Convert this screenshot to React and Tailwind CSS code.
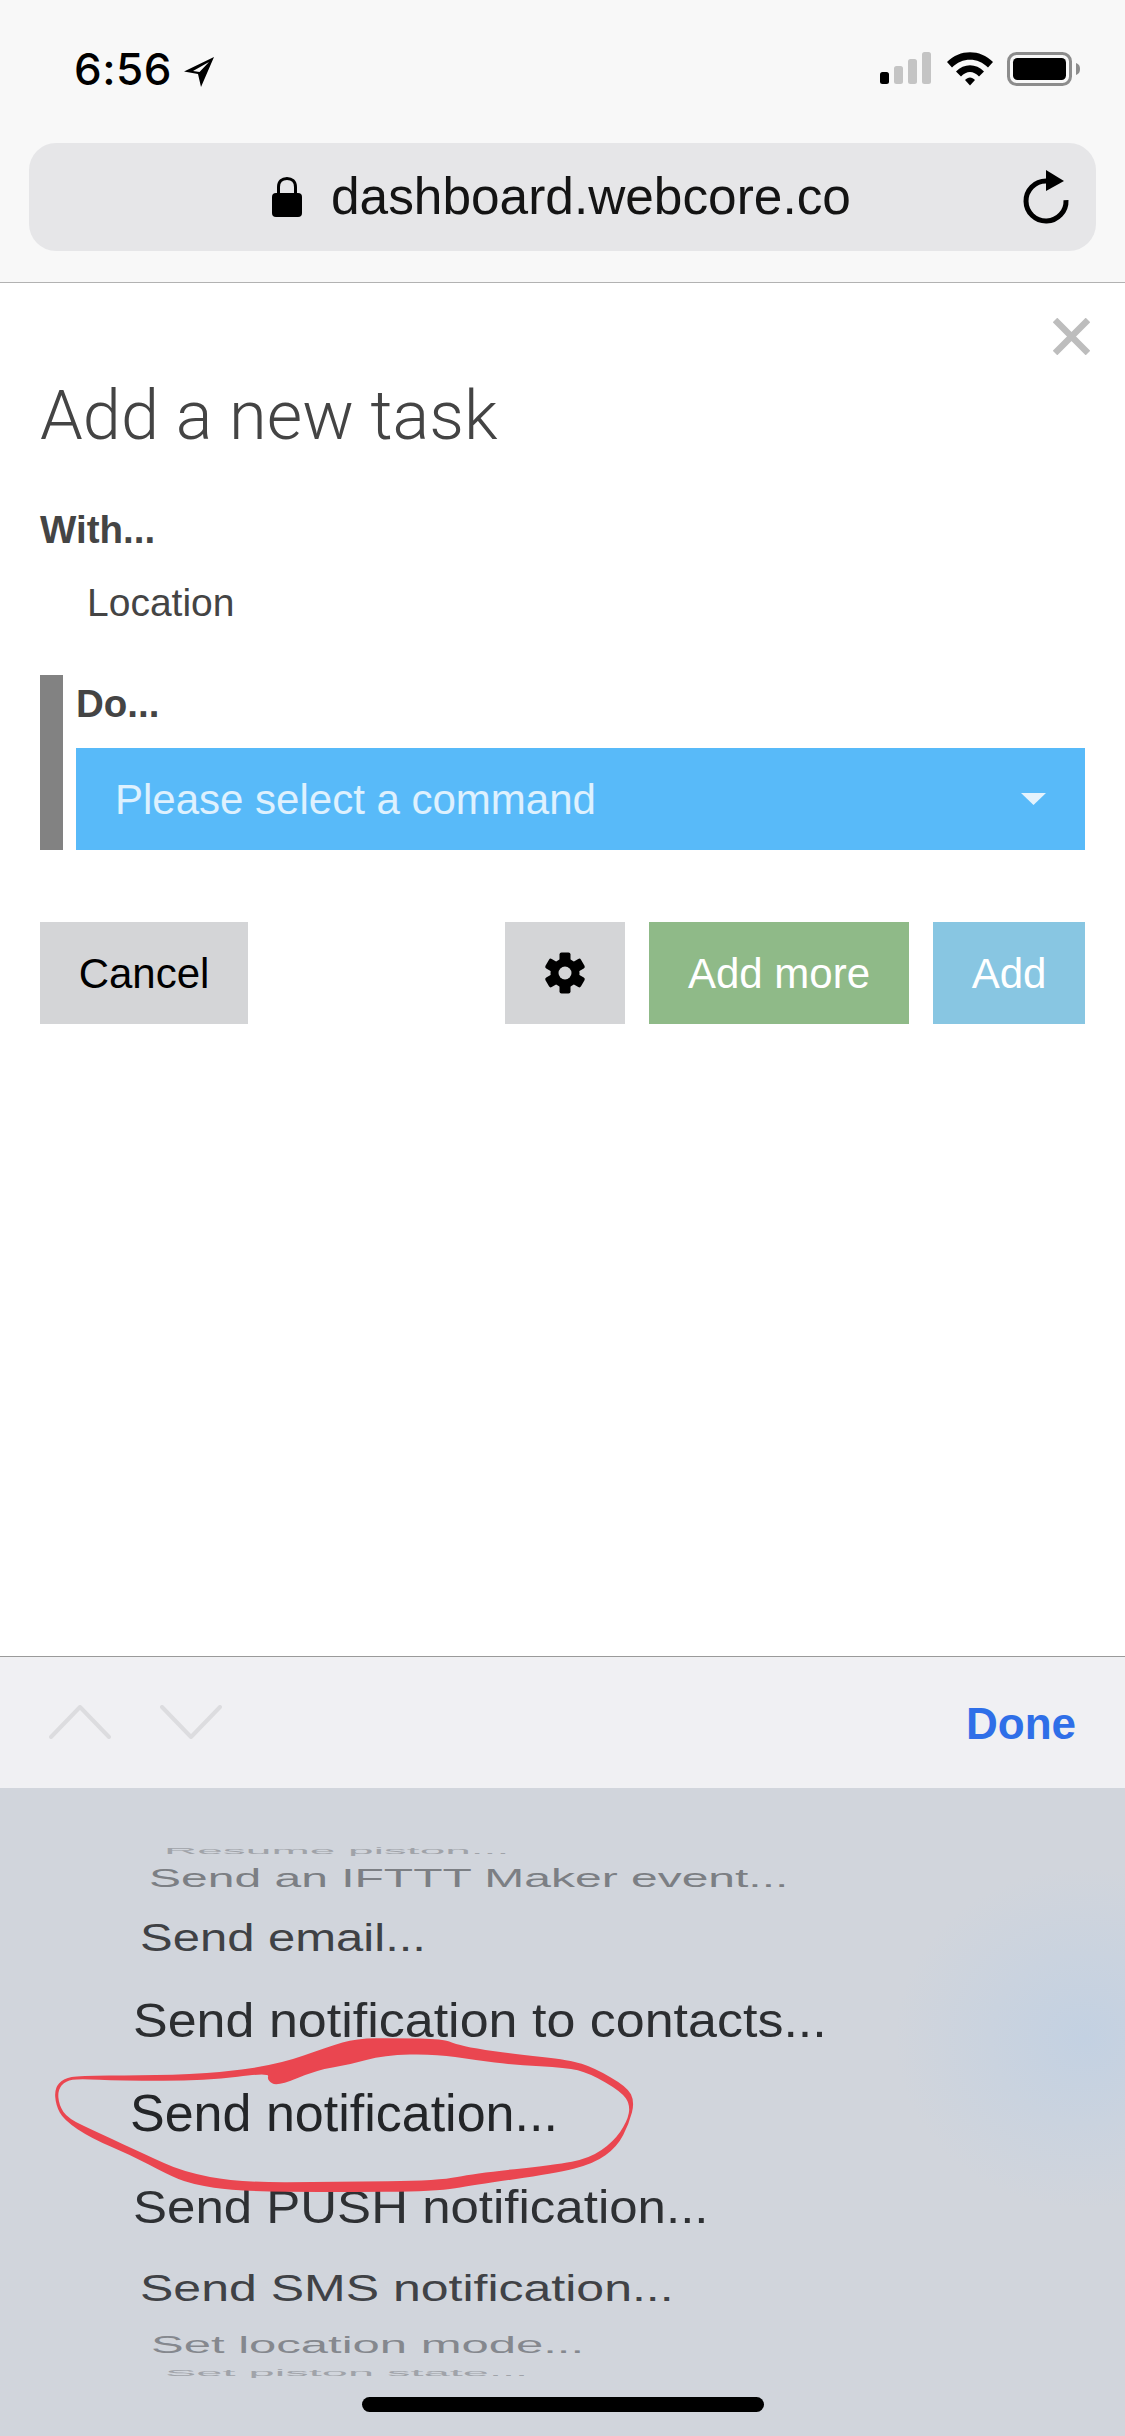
import React from "react";

const rows = [
  { label: "Resume piston...", cls: "pl-[164px] text-[46px] scale-y-[0.2] text-[#a0a3a9]", h: "h-[24px]" },
  { label: "Send an IFTTT Maker event...", cls: "pl-[149px] text-[48px] scale-y-[0.53] text-[#7c7f84]", h: "h-[32px]" },
  { label: "Send email...", cls: "pl-[140px] text-[49px] scale-y-[0.8] text-[#3f4145]", h: "h-[84px]" },
  { label: "Send notification to contacts...", cls: "pl-[133px] text-[52px] scale-y-[0.94] text-[#2c2e31]", h: "h-[82px]" },
  { label: "Send notification...", cls: "pl-[130px] text-[52px] text-[#232528]", h: "h-[104px]" },
  { label: "Send PUSH notification...", cls: "pl-[133px] text-[51px] scale-y-[0.9] text-[#2e3033]", h: "h-[84px]" },
  { label: "Send SMS notification...", cls: "pl-[140px] text-[50px] scale-y-[0.75] text-[#404246]", h: "h-[78px]" },
  { label: "Set location mode...", cls: "pl-[151px] text-[49px] scale-y-[0.47] text-[#85888e]", h: "h-[36px]" },
  { label: "Set piston state...", cls: "pl-[165px] text-[47px] scale-y-[0.18] text-[#a0a3a9]", h: "h-[20px]" },
];

// outline of the hand drawn ring, in the coordinates of a 1568x540 crop
const ringOuter = [
  [600, 105], [420, 132], [250, 136], [100, 137], [60, 145], [37, 175], [40, 225], [60, 270], [130, 325], [230, 375],
  [320, 432], [380, 462], [500, 484], [750, 486], [1000, 485], [1100, 465], [1300, 430], [1400, 402], [1460, 350],
  [1490, 280], [1504, 215], [1485, 170], [1400, 113], [1340, 90], [1200, 72], [1100, 55], [1050, 42], [1020, 27],
  [900, 24], [800, 25], [730, 50],
];
const ringInner = [
  [580, 128], [574, 150], [600, 170], [700, 120], [780, 105], [870, 75], [1000, 72], [1100, 90], [1200, 105], [1330, 112],
  [1390, 130], [1470, 185], [1493, 225], [1485, 275], [1450, 335], [1390, 385], [1300, 405], [1100, 430], [1010, 452],
  [750, 456], [500, 457], [360, 425], [270, 375], [150, 310], [70, 265], [48, 225], [45, 180], [65, 152], [100, 146],
  [200, 152], [420, 152],
];

const smooth = (pts) => {
  const mid = (a, b) => [(a[0] + b[0]) / 2, (a[1] + b[1]) / 2];
  const start = mid(pts[pts.length - 1], pts[0]);
  let d = `M${start[0]} ${start[1]}`;
  pts.forEach((p, i) => {
    const m = mid(p, pts[(i + 1) % pts.length]);
    d += ` Q${p[0]} ${p[1]} ${m[0]} ${m[1]}`;
  });
  return d + " Z";
};

const StatusIcons = () => (
  <div className="flex items-center">
    <svg width="52" height="34" viewBox="0 0 52 34" className="block">
      <rect x="0" y="20" width="9" height="12" rx="2.5" fill="#000" />
      <rect x="14" y="14" width="9" height="18" rx="2.5" fill="#c4c4c4" />
      <rect x="28" y="7" width="9" height="25" rx="2.5" fill="#c4c4c4" />
      <rect x="42" y="0" width="9" height="32" rx="2.5" fill="#c4c4c4" />
    </svg>
    <svg width="46" height="34" viewBox="0 0 46 34" className="ml-[15px] block">
      <path d="M0 10 C13 -3 33 -3 46 10 L41 15.5 C31 5 15 5 5 15.5 Z" fill="#000" />
      <path d="M9 19.5 C17 11 29 11 37 19.5 L32 24.5 C26.5 18.5 19.5 18.5 14 24.5 Z" fill="#000" />
      <path d="M18 28 C21 24.5 25 24.5 28 28 L23 33.5 Z" fill="#000" />
    </svg>
    <svg width="74" height="34" viewBox="0 0 74 34" className="ml-[14px] block">
      <rect x="1.5" y="1.5" width="62" height="31" rx="8" fill="none" stroke="#8c8c8c" strokeWidth="3" />
      <rect x="6" y="6" width="53" height="22" rx="4.5" fill="#000" />
      <path d="M69 11 C72 12 73 14 73 17 C73 20 72 22 69 23 Z" fill="#8c8c8c" />
    </svg>
  </div>
);

const Gear = () => (
  <svg width="42" height="42" viewBox="-21 -21 42 42" className="block">
    <circle r="14.5" fill="#000" />
    {[0, 60, 120, 180, 240, 300].map((a) => (
      <rect key={a} x="-5.5" y="-20.5" width="11" height="10" rx="2" fill="#000" transform={`rotate(${a})`} />
    ))}
    <circle r="6.5" fill="#d4d5d7" />
  </svg>
);

const Ring = () => (
  <svg viewBox="0 0 1568 540" preserveAspectRatio="none" className="absolute left-[40px] top-[242px] w-[620px] h-[180px]">
    <path fill="#ea4650" fillRule="evenodd" d={`${smooth(ringOuter)} ${smooth(ringInner)}`} />
  </svg>
);

export default function App() {
  return (
    <div className="relative w-[1125px] h-[2436px] overflow-hidden flex flex-col bg-white font-['Liberation_Sans',Arial,sans-serif]">
      {/* safari chrome */}
      <div className="h-[283px] shrink-0 bg-[#f8f8f8] border-b border-[#b2b2b2]">
        <div className="flex items-start justify-between pt-[52px] pl-[74px] pr-[44px] h-[143px]">
          <div className="flex items-start">
            <span className="font-['Inter',sans-serif] font-medium text-[44px] leading-[34px] tracking-[0.5px] text-black">6:56</span>
            <svg width="32" height="32" viewBox="0 0 32 32" className="ml-[11px] mt-[4px] block">
              <path d="M31 1 L1 15.5 L15 18 L18 31 Z M26 6 L16.5 16 L10 15 Z" fillRule="evenodd" fill="#000" />
            </svg>
          </div>
          <StatusIcons />
        </div>
        <div className="mx-[29px] h-[108px] rounded-[27px] bg-[#e6e6e8] flex items-center pl-[243px] pr-[27px]">
          <svg width="30" height="40" viewBox="0 0 30 40" className="block">
            <path d="M6.5 18 V10 C6.5 4.5 10 1.5 15 1.5 C20 1.5 23.5 4.5 23.5 10 V18" fill="none" stroke="#000" strokeWidth="3" />
            <rect x="0" y="16" width="30" height="24" rx="4" fill="#000" />
          </svg>
          <span className="ml-[29px] text-[51.4px] leading-none text-[#141414]">dashboard.webcore.co</span>
          <svg width="46" height="54" viewBox="0 0 46 54" className="ml-auto block">
            <path d="M43 30 A20 20 0 1 1 23 11" fill="none" stroke="#000" strokeWidth="5" />
            <path d="M23 0 L41 11 L23 21 Z" fill="#000" />
          </svg>
        </div>
      </div>

      {/* task dialog */}
      <div className="flex-1 px-10">
        <div className="flex justify-end pt-[35px] -mr-[5px]">
          <svg width="37" height="37" viewBox="0 0 37 37" className="block">
            <path d="M2 2 L35 35 M35 2 L2 35" stroke="#bdbdbd" strokeWidth="6.5" />
          </svg>
        </div>
        <h1 className="mt-[25px] h-[72px] leading-[72px] font-['Roboto',sans-serif] font-light text-[68.5px] text-[#444]">Add a new task</h1>
        <div className="mt-[56px] h-[44px] leading-[44px] text-[38.5px] font-bold text-[#444]">With...</div>
        <div className="mt-[29px] h-[44px] leading-[44px] pl-[47px] text-[39px] text-[#444]">Location</div>
        <div className="mt-[50px] h-[175px] flex gap-[13px]">
          <div className="w-[23px] bg-[#828282]" />
          <div className="flex-1 pt-[7px]">
            <div className="h-[44px] leading-[44px] text-[38.5px] font-bold text-[#444]">Do...</div>
            <div className="mt-[22px] h-[102px] bg-[#58baf9] flex items-center pl-[39px] pr-[39px] text-[42px] text-white/80">
              <span>Please select a command</span>
              <svg width="25" height="12" viewBox="0 0 25 12" className="ml-auto block">
                <path d="M0 0 H25 L12.5 12 Z" fill="#e4f3fd" />
              </svg>
            </div>
          </div>
        </div>
        <div className="mt-[72px] flex h-[102px] text-[42px]">
          <button className="w-[208px] bg-[#d4d5d7] text-black">Cancel</button>
          <button className="ml-auto w-[120px] bg-[#d4d5d7] flex items-center justify-center"><Gear /></button>
          <button className="ml-[24px] w-[260px] bg-[#8fba88] text-white">Add more</button>
          <button className="ml-[24px] w-[152px] bg-[#88c6e2] text-white">Add</button>
        </div>
      </div>

      {/* keyboard accessory */}
      <div className="h-[132px] shrink-0 bg-[#f0f0f3] border-t border-[#9a9a9a] flex items-center pl-[49px] pr-[49px]">
        <svg width="62" height="34" viewBox="0 0 62 34" className="block -mt-[2px]">
          <path d="M2 32 L31 2 L60 32" fill="none" stroke="#dcdcdf" strokeWidth="4" strokeLinecap="round" strokeLinejoin="round" />
        </svg>
        <svg width="62" height="34" viewBox="0 0 62 34" className="ml-[49px] block -mt-[2px]">
          <path d="M2 2 L31 32 L60 2" fill="none" stroke="#dcdcdf" strokeWidth="4" strokeLinecap="round" strokeLinejoin="round" />
        </svg>
        <span className="ml-auto mt-[3px] font-bold text-[44px] text-[#2f6fe8]">Done</span>
      </div>

      {/* command picker */}
      <div className="relative h-[648px] shrink-0 pt-[51px] bg-[#d1d5dc] bg-[radial-gradient(ellipse_190px_170px_at_1085px_250px,#c3d1e2_0%,#c3d1e200_100%)]">
        {rows.map((r) => (
          <div key={r.label} className={`${r.h} flex items-center whitespace-nowrap`}>
            <div className={`leading-none ${r.cls}`}>{r.label}</div>
          </div>
        ))}
        <div className="mt-[14px] mx-auto w-[402px] h-[15px] rounded-full bg-black" />
        <Ring />
      </div>
    </div>
  );
}
